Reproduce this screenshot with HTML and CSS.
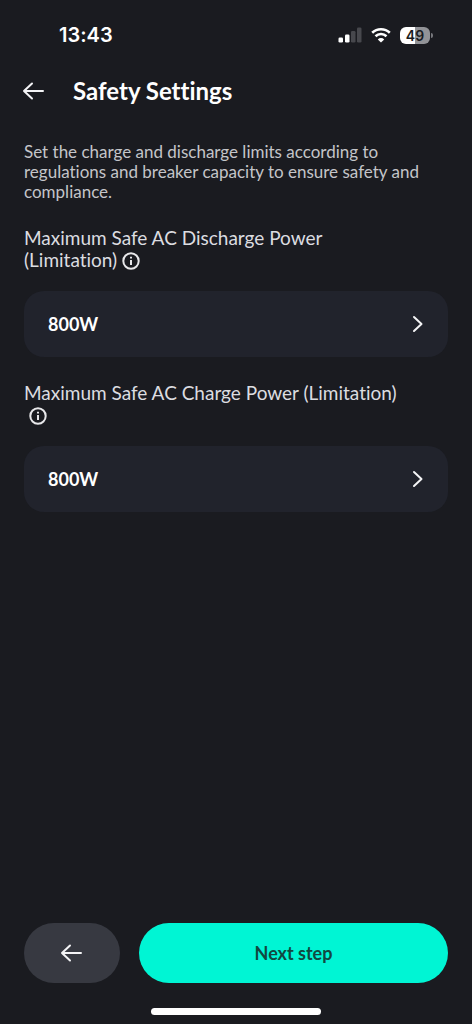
FILE: index.html
```html
<!DOCTYPE html>
<html lang="en">
<head>
<meta charset="utf-8">
<meta name="viewport" content="width=device-width, initial-scale=1">
<title>Safety Settings</title>
<link rel="stylesheet" href="styles.css">
</head>
<body>
<div class="screen">
  <div class="status">
    <span class="clock">13:43</span>
    <div class="indicators">
      <svg class="signal" width="24" height="16" viewBox="0 0 24 16" aria-hidden="true">
        <rect x="0.500" y="10.500" width="4.500" height="5" rx="1.300" fill="#fff"/>
        <rect x="7" y="7.500" width="4.500" height="8" rx="1.300" fill="#fff"/>
        <rect x="13" y="4" width="4.500" height="11.500" rx="1.300" fill="#47484d"/>
        <rect x="19" y="0.500" width="4.500" height="15" rx="1.300" fill="#47484d"/>
      </svg>
      <svg class="wifi" width="20" height="16" viewBox="0 0 20 16" aria-hidden="true">
        <path d="M1.200 5.800a12.600 12.600 0 0 1 17.600 0M4.500 9.200a7.900 7.900 0 0 1 11 0" fill="none" stroke="#fff" stroke-width="2.600"/>
        <path d="M10 15.600l-3.200-3.200a4.600 4.600 0 0 1 6.400 0z" fill="#fff"/>
      </svg>
      <div class="battery"><span class="level">49</span><span class="nub"></span></div>
    </div>
  </div>

  <header class="header">
    <button class="back" type="button" aria-label="Back">
      <svg width="22" height="18" viewBox="0 0 22 18" aria-hidden="true"><path d="M20 9H1M9 1.500L1 9L9 16.500"/></svg>
    </button>
    <h1 class="title">Safety Settings</h1>
  </header>

  <main class="content">
    <p class="intro">Set the charge and discharge limits according to regulations and breaker capacity to ensure safety and compliance.</p>

    <section class="setting">
      <h2 class="label" id="discharge">Maximum Safe AC Discharge Power (Limitation)<wbr><button class="info" type="button" aria-label="About discharge power"><svg width="18" height="18" viewBox="0 0 18 18" aria-hidden="true"><circle cx="9" cy="9" r="7.700"/><path d="M9 8v5M9 4.800v1.700"/></svg></button></h2>
      <button class="option" type="button" aria-describedby="discharge">
        <span>800W</span>
        <svg width="12" height="18" viewBox="0 0 12 18" aria-hidden="true"><path d="M2 2L9.500 9L2 16"/></svg>
      </button>
    </section>

    <section class="setting">
      <h2 class="label" id="charge">Maximum Safe AC Charge Power (Limitation)<wbr><button class="info" type="button" aria-label="About charge power"><svg width="18" height="18" viewBox="0 0 18 18" aria-hidden="true"><circle cx="9" cy="9" r="7.700"/><path d="M9 8v5M9 4.800v1.700"/></svg></button></h2>
      <button class="option" type="button" aria-describedby="charge">
        <span>800W</span>
        <svg width="12" height="18" viewBox="0 0 12 18" aria-hidden="true"><path d="M2 2L9.500 9L2 16"/></svg>
      </button>
    </section>
  </main>

  <footer class="footer">
    <div class="actions">
      <button class="previous" type="button" aria-label="Previous step">
        <svg width="22" height="18" viewBox="0 0 22 18" aria-hidden="true"><path d="M20 9H1M9 1.500L1 9L9 16.500"/></svg>
      </button>
      <button class="next" type="button">Next step</button>
    </div>
    <div class="home"></div>
  </footer>
</div>
</body>
</html>
```
FILE: styles.css
```css
* {
  box-sizing: border-box;
}

body {
  margin: 0;
  background: #1a1b20;
  color: #fff;
  font-family: Lato, "Open Sans", sans-serif;
  font-variant-ligatures: none;
}

h1,
h2,
p {
  margin: 0;
}

button {
  margin: 0;
  padding: 0;
  border: 0;
  background: none;
  color: inherit;
  font: inherit;
  cursor: pointer;
}

svg {
  display: block;
  overflow: visible;
}

.screen {
  display: flex;
  flex-direction: column;
  min-height: 100vh;
}

.status {
  display: flex;
  align-items: center;
  justify-content: space-between;
  height: 70px;
  padding: 0 39px 0 59px;
}

.clock {
  font-family: Inter, sans-serif;
  font-size: 20px;
  font-weight: 600;
  line-height: 24px;
}

.indicators {
  display: flex;
  align-items: center;
  gap: 9px;
}

.battery {
  display: flex;
  align-items: center;
  gap: 1px;
}

.level {
  width: 30px;
  border-radius: 6px;
  background: linear-gradient(90deg, #fff 50%, #929397 50%);
  color: #1a1b20;
  font-family: Inter, sans-serif;
  font-size: 14px;
  font-weight: 600;
  line-height: 17px;
  text-align: center;
}

.nub {
  width: 2px;
  height: 5px;
  border-radius: 0 2px 2px 0;
  background: #77787c;
}

.header {
  display: flex;
  align-items: center;
  gap: 28px;
  height: 42px;
  padding: 0 23px;
}

.back svg,
.previous svg,
.option svg {
  fill: none;
  stroke: #f4f4f6;
  stroke-width: 2;
  stroke-linecap: round;
  stroke-linejoin: round;
}

.title {
  font-size: 24px;
  font-weight: 700;
  line-height: 28px;
}

.content {
  flex: 1;
  padding: 30px 24px 24px;
}

.intro {
  color: #c4c5c9;
  font-size: 17px;
  line-height: 20px;
}

.setting {
  margin-top: 25px;
}

.label {
  padding-right: 36px;
  color: #dcdde0;
  font-size: 19px;
  font-weight: 400;
  line-height: 22px;
}

.info {
  height: 18px;
  margin-left: 5px;
  vertical-align: -3px;
}

.info svg {
  fill: none;
  stroke: #e8e8ea;
  stroke-width: 2;
}

.option {
  display: flex;
  align-items: center;
  justify-content: space-between;
  width: 100%;
  height: 66px;
  margin-top: 20px;
  padding: 0 24px;
  border-radius: 20px;
  background: #21232c;
  font-size: 18px;
  font-weight: 700;
}

.footer {
  padding: 0 24px 9px;
}

.actions {
  display: flex;
  gap: 19px;
}

.previous,
.next {
  display: flex;
  align-items: center;
  justify-content: center;
  height: 60px;
  border-radius: 30px;
}

.previous {
  flex: 0 0 96px;
  background: #373941;
}

.next {
  flex: 1;
  background: #00f5d4;
  color: #124840;
  font-size: 18px;
  font-weight: 700;
}

.home {
  width: 40%;
  height: 7px;
  margin: 25px auto 0;
  border-radius: 4px;
  background: #fff;
}
```
